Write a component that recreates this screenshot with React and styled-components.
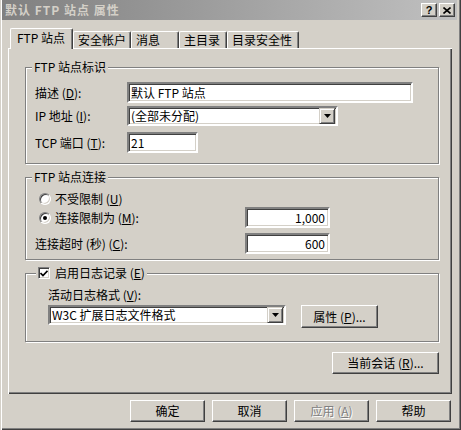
import React from 'react';
import styled, {createGlobalStyle} from 'styled-components';

const GlobalStyle = createGlobalStyle`
  html, body {
    margin: 0;
    padding: 0;
    background: #d4d0c8;
  }
  body {
    font-family: "Noto Sans CJK SC", "Liberation Sans", sans-serif;
    font-size: 12px;
    color: #000;
  }
  u { text-decoration: underline; text-underline-offset: 1px; }
`;

const Window = styled.div`
  width: 461px;
  height: 430px;
  box-sizing: border-box;
  display: flex;
  flex-direction: column;
  background: #d4d0c8;
  padding: 0 4px 2px 2px;
  box-shadow: inset 1px 0 0 #d4d0c8, inset 2px 0 0 #fff,
    inset -1px -1px 0 #404040, inset -2px -2px 0 #808080;
`;

const TitleBar = styled.div`
  height: 20px;
  display: flex;
  align-items: center;
  padding: 0 2px 0 2px;
  background: linear-gradient(to right, #808080, #c0c0c0);
`;

const Title = styled.div`
  font-weight: bold;
  font-size: 12px;
  line-height: 14px;
  letter-spacing: 1px;
  color: #d4d0c8;
  white-space: pre;
  margin-left: 1px;
`;

const CaptionButtons = styled.div`
  margin-left: auto;
  display: flex;
  gap: 2px;
`;

const CaptionButton = styled.div`
  width: 16px;
  height: 14px;
  box-sizing: border-box;
  background: #d4d0c8;
  border: 1px solid;
  border-color: #fff #404040 #404040 #fff;
  box-shadow: inset -1px -1px 0 #808080;
  display: flex;
  align-items: center;
  justify-content: center;
  font-family: "Liberation Sans", sans-serif;
  font-weight: bold;
  font-size: 11px;
  line-height: 11px;
`;

const Body = styled.div`
  flex: 1;
  display: flex;
  flex-direction: column;
  padding: 8px 5px 0 6px;
`;

const TabStrip = styled.div`
  display: flex;
  align-items: flex-end;
  height: 20px;
  padding-left: 2px;
  position: relative;
  z-index: 1;
`;

const Tab = styled.div`
  box-sizing: border-box;
  width: ${p => p.$w}px;
  height: ${p => (p.$active ? 21 : 17)}px;
  margin-bottom: ${p => (p.$active ? -1 : 0)}px;
  padding-left: ${p => (p.$active ? 6 : 4)}px;
  padding-bottom: ${p => (p.$active ? 2 : 0)}px;
  display: flex;
  align-items: center;
  background: #d4d0c8;
  border-top: 1px solid #fff;
  border-left: 1px solid #fff;
  border-right: 1px solid #404040;
  border-radius: 2px 2px 0 0;
  box-shadow: inset -1px 0 0 #808080;
  white-space: pre;
  line-height: 14px;
`;

const Panel = styled.div`
  height: 346px;
  box-sizing: border-box;
  display: flex;
  flex-direction: column;
  padding: 19px 13px 0 17px;
  background: #d4d0c8;
  box-shadow: inset 1px 1px 0 #fff, inset -1px -1px 0 #404040,
    inset -2px -2px 0 #808080;
`;

const Group = styled.div`
  position: relative;
  border: 1px solid #808080;
  box-shadow: inset 1px 1px 0 #fff, 1px 1px 0 #fff;
  padding: ${p => p.$pad};
  margin-bottom: 13px;
  display: flex;
  flex-direction: column;
`;

const Legend = styled.div`
  position: absolute;
  top: ${p => p.$top || -8}px;
  left: ${p => p.$left || 6}px;
  padding: 0 2px;
  background: #d4d0c8;
  line-height: 14px;
  display: flex;
  align-items: center;
  gap: 5px;
  white-space: pre;
`;

const Row = styled.div`
  display: flex;
  align-items: ${p => p.$align || 'center'};
  margin-top: ${p => p.$mt || 0}px;
  gap: ${p => p.$gap || 0}px;
`;

const Label = styled.div`
  width: ${p => (p.$w ? `${p.$w}px` : 'auto')};
  line-height: 14px;
  white-space: pre;
  color: ${p => (p.$disabled ? '#808080' : '#000')};
`;

const Edit = styled.input`
  box-sizing: border-box;
  width: ${p => p.$w}px;
  height: 21px;
  margin: 0;
  padding: 0 3px 0 2px;
  font: inherit;
  font-size: 12px;
  color: #000;
  text-align: ${p => p.$align || 'left'};
  background: #fff;
  border: 2px solid;
  border-color: #808080 #fff #fff #808080;
  box-shadow: inset 1px 1px 0 #404040, inset -1px -1px 0 #d4d0c8;
  outline: none;
`;

const Select = styled.div`
  box-sizing: border-box;
  width: ${p => p.$w}px;
  height: 20px;
  display: flex;
  align-items: center;
  background: #fff;
  border: 2px solid;
  border-color: #808080 #fff #fff #808080;
  box-shadow: inset 1px 1px 0 #404040, inset -1px -1px 0 #d4d0c8;
  padding: 1px 1px 1px 2px;
`;

const SelectText = styled.div`
  flex: 1;
  line-height: 14px;
  white-space: pre;
`;

const DropButton = styled.div`
  width: 16px;
  height: 16px;
  box-sizing: border-box;
  background: #d4d0c8;
  border: 1px solid;
  border-color: #d4d0c8 #404040 #404040 #d4d0c8;
  box-shadow: inset 1px 1px 0 #fff, inset -1px -1px 0 #808080;
  display: flex;
  align-items: center;
  justify-content: center;
`;

const Button = styled.div`
  box-sizing: border-box;
  width: ${p => p.$w}px;
  height: ${p => p.$h || 22}px;
  background: #d4d0c8;
  border: 1px solid;
  border-color: #fff #404040 #404040 #fff;
  box-shadow: inset -1px -1px 0 #808080;
  display: flex;
  align-items: center;
  justify-content: center;
  line-height: 14px;
  white-space: pre;
  color: ${p => (p.$disabled ? '#808080' : '#000')};
  text-shadow: ${p => (p.$disabled ? '1px 1px 0 #fff' : 'none')};
  align-self: ${p => p.$self || 'auto'};
`;

const Radio = styled.span`
  box-sizing: border-box;
  width: 12px;
  height: 12px;
  border-radius: 50%;
  background: #fff;
  border: 1px solid;
  border-color: #808080 #fff #fff #808080;
  box-shadow: inset 1px 1px 0 #404040, inset -1px -1px 0 #d4d0c8;
  display: flex;
  align-items: center;
  justify-content: center;
  margin-right: 4px;
  &::after {
    content: '';
    width: 4px;
    height: 4px;
    border-radius: 50%;
    background: ${p => (p.$checked ? '#000' : 'transparent')};
  }
`;

const RadioLabel = styled.div`
  display: flex;
  align-items: center;
  width: ${p => (p.$w ? `${p.$w}px` : 'auto')};
  padding-left: 4px;
  box-sizing: border-box;
  line-height: 14px;
  white-space: pre;
`;

const Check = styled.span`
  box-sizing: border-box;
  width: 12px;
  height: 12px;
  background: #fff;
  border: 1px solid;
  border-color: #808080 #fff #fff #808080;
  box-shadow: inset 1px 1px 0 #404040, inset -1px -1px 0 #d4d0c8;
  display: flex;
  align-items: center;
  justify-content: center;
`;

const Footer = styled.div`
  display: flex;
  justify-content: flex-end;
  gap: 7px;
  margin-top: 6px;
  margin-right: 1px;
`;

const Arrow = () => (
    <svg width="7" height="4" viewBox="0 0 7 4">
        <polygon points="0,0 7,0 3.5,4" fill="#000"/>
    </svg>
);

const CloseGlyph = () => (
    <svg width="8" height="7" viewBox="0 0 8 7">
        <path d="M0.5 0.5 L7.5 6.5 M7.5 0.5 L0.5 6.5" stroke="#000" strokeWidth="1.6"/>
    </svg>
);

const CheckGlyph = () => (
    <svg width="8" height="7" viewBox="0 0 8 7">
        <path d="M0.5 3 L3 5.5 L7.5 0.8" stroke="#000" strokeWidth="1.7" fill="none"/>
    </svg>
);

const tabs = [
    {name: 'FTP 站点', w: 63, active: true},
    {name: '安全帐户', w: 58},
    {name: '消息', w: 48},
    {name: '主目录', w: 48},
    {name: '目录安全性', w: 72},
];

const App = () => {
    return (
        <>
            <GlobalStyle/>
            <Window>
                <TitleBar>
                    <Title>默认 FTP 站点 属性</Title>
                    <CaptionButtons>
                        <CaptionButton>?</CaptionButton>
                        <CaptionButton><CloseGlyph/></CaptionButton>
                    </CaptionButtons>
                </TitleBar>

                <Body>
                    <TabStrip>
                        {tabs.map(t => (
                            <Tab key={t.name} $w={t.w} $active={t.active}>{t.name}</Tab>
                        ))}
                    </TabStrip>

                    <Panel>
                        <Group $pad="14px 0 10px 9px">
                            <Legend>FTP 站点标识</Legend>
                            <Row>
                                <Label $w={92}>描述 (<u>D</u>):</Label>
                                <Edit $w={286} value="默认 FTP 站点" readOnly/>
                            </Row>
                            <Row $mt={3}>
                                <Label $w={92}>IP 地址 (<u>I</u>):</Label>
                                <Select $w={211}>
                                    <SelectText>(全部未分配)</SelectText>
                                    <DropButton><Arrow/></DropButton>
                                </Select>
                            </Row>
                            <Row $mt={6}>
                                <Label $w={92}>TCP 端口 (<u>T</u>):</Label>
                                <Edit $w={71} value="21" readOnly/>
                            </Row>
                        </Group>

                        <Group $pad="13px 0 5px 9px">
                            <Legend>FTP 站点连接</Legend>
                            <Row style={{height: 16}}>
                                <RadioLabel><Radio/>不受限制 (<u>U</u>)</RadioLabel>
                            </Row>
                            <Row>
                                <RadioLabel $w={210}><Radio $checked/>连接限制为 (<u>M</u>):</RadioLabel>
                                <Edit $w={85} $align="right" value="1,000" readOnly/>
                            </Row>
                            <Row $mt={5}>
                                <Label $w={210}>连接超时 (秒) (<u>C</u>):</Label>
                                <Edit $w={85} $align="right" value="600" readOnly/>
                            </Row>
                        </Group>

                        <Group $pad="14px 0 13px 22px">
                            <Legend $left={10}>
                                <Check><CheckGlyph/></Check>
                                <span>启用日志记录 (<u>E</u>)</span>
                            </Legend>
                            <Label>活动日志格式 (<u>V</u>):</Label>
                            <Row $mt={3} $align="flex-start" $gap={15}>
                                <Select $w={238}>
                                    <SelectText>W3C 扩展日志文件格式</SelectText>
                                    <DropButton><Arrow/></DropButton>
                                </Select>
                                <Button $w={77} $h={23}>属性 (<u>P</u>)...</Button>
                            </Row>
                        </Group>

                        <Button $w={107} $self="flex-end" style={{marginTop: -3}}>当前会话 (<u>R</u>)...</Button>
                    </Panel>

                    <Footer>
                        <Button $w={75}>确定</Button>
                        <Button $w={75}>取消</Button>
                        <Button $w={75} $disabled>应用 (<u>A</u>)</Button>
                        <Button $w={75}>帮助</Button>
                    </Footer>
                </Body>
            </Window>
        </>
    );
};

export default App;
